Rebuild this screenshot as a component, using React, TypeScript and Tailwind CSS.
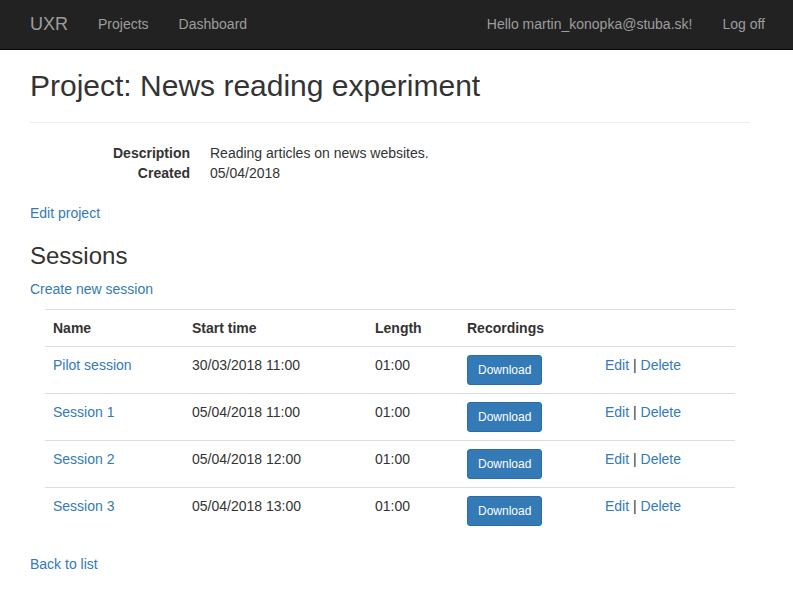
const SESSIONS = [
  { name: 'Pilot session', start: '30/03/2018 11:00', length: '01:00' },
  { name: 'Session 1', start: '05/04/2018 11:00', length: '01:00' },
  { name: 'Session 2', start: '05/04/2018 12:00', length: '01:00' },
  { name: 'Session 3', start: '05/04/2018 13:00', length: '01:00' },
];

export default function App() {
  return (
    <div className="min-h-[592px] bg-white text-[14px] leading-[20px] text-[#333] font-['Liberation_Sans',Arial,sans-serif]">
      {/* Navbar */}
      <nav className="h-[50px] bg-[#222] border-b border-[#080808] flex items-center justify-between pl-[15px] pr-[13px] pb-[2px] text-[#9d9d9d]">
        <div className="flex items-center">
          <a className="px-[15px] text-[18px] leading-[20px]">UXR</a>
          <a className="px-[15px]">Projects</a>
          <a className="px-[15px]">Dashboard</a>
        </div>
        <div className="flex items-center">
          <a className="px-[15px]">Hello martin_konopka@stuba.sk!</a>
          <a className="px-[15px]">Log off</a>
        </div>
      </nav>

      {/* Body */}
      <main className="ml-[30px] w-[720px]">
        <h2 className="pt-[19px] text-[30px] leading-[33px]">Project: News reading experiment</h2>
        <hr className="mt-[20px] mb-[20px] border-t border-[#eee]" />

        <dl className="grid grid-cols-[160px_1fr] gap-x-[20px] mb-[20px]">
          <dt className="text-right font-bold">Description</dt>
          <dd>Reading articles on news websites.</dd>
          <dt className="text-right font-bold">Created</dt>
          <dd>05/04/2018</dd>
        </dl>

        <p className="mb-[20px]">
          <a className="text-[#337ab7]">Edit project</a>
        </p>

        <h3 className="text-[24px] leading-[26px] mb-[10px]">Sessions</h3>
        <p className="mb-[10px]">
          <a className="text-[#337ab7]">Create new session</a>
        </p>

        <div className="px-[15px]">
          <table className="w-full border-collapse mb-[20px] text-left">
            <thead>
              <tr className="border-t border-b border-[#ddd]">
                <th className="w-[139px] p-[8px] align-bottom font-bold">Name</th>
                <th className="w-[183px] p-[8px] align-bottom font-bold">Start time</th>
                <th className="w-[92px] p-[8px] align-bottom font-bold">Length</th>
                <th className="w-[138px] p-[8px] align-bottom font-bold">Recordings</th>
                <th className="p-[8px]"></th>
              </tr>
            </thead>
            <tbody>
              {SESSIONS.map((s, i) => (
                <tr key={s.name} className={i > 0 ? 'border-t border-[#ddd]' : ''}>
                  <td className="p-[8px] align-top">
                    <a className="text-[#337ab7]">{s.name}</a>
                  </td>
                  <td className="p-[8px] align-top">{s.start}</td>
                  <td className="p-[8px] align-top">{s.length}</td>
                  <td className="p-[8px] align-top">
                    <button className="h-[30px] px-[10px] text-[12px] leading-[18px] text-white bg-[#337ab7] border border-[#2e6da4] rounded-[3px]">
                      Download
                    </button>
                  </td>
                  <td className="p-[8px] align-top">
                    <a className="text-[#337ab7]">Edit</a> | <a className="text-[#337ab7]">Delete</a>
                  </td>
                </tr>
              ))}
            </tbody>
          </table>
        </div>

        <p>
          <a className="text-[#337ab7]">Back to list</a>
        </p>
      </main>
    </div>
  );
}
